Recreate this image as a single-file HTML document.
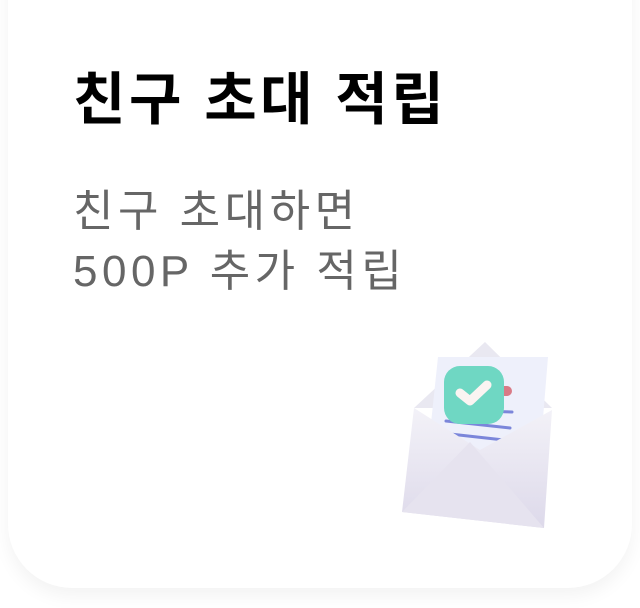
<!DOCTYPE html>
<html><head><meta charset="utf-8"><style>
html,body{margin:0;width:640px;height:608px;background:#fff;overflow:hidden;font-family:"Liberation Sans","Noto Sans CJK KR",sans-serif}
.card{position:absolute;left:8px;top:-80px;width:624px;height:668px;background:#fff;border-radius:64px;box-shadow:0 8px 18px rgba(0,0,0,0.05)}
.t{position:absolute;left:73px;top:65px;font-size:57px;font-weight:700;color:#000;line-height:70px;white-space:nowrap;letter-spacing:3.5px}
.s{position:absolute;left:73px;top:182px;font-size:44px;color:#666;line-height:60px;white-space:nowrap;letter-spacing:4.5px}
</style></head><body>
<div class="card"></div>
<div class="t">친구 초대 적립</div>
<div class="s">친구 초대하면<br>500P 추가 적립</div>
<svg style="position:absolute;left:380px;top:330px" width="200" height="220" viewBox="0 0 200 220">
<defs><linearGradient id="e" x1="0" y1="0" x2="0" y2="1"><stop offset="0" stop-color="#f3f2f8"/><stop offset="1" stop-color="#ddd9ea"/></linearGradient></defs>
<path d="M34 78 L105 12 L172 78 Z" fill="#e9e8f1"/>
<path d="M58 27 L168 27 L158 150 L45 150 Z" fill="#eef0fb"/>
<rect x="104" y="56" width="28" height="10" rx="5" fill="#d97a86"/>
<path d="M100 81 L132 82 M66 91 L130 98 M70 104 L124 110" stroke="#7b86da" stroke-width="3" stroke-linecap="round"/>
<rect x="64" y="36" width="60" height="58" rx="16" fill="#6fd7c3"/>
<path d="M80 63 L90 71 L107 55" stroke="#fbf4f2" stroke-width="9" fill="none" stroke-linecap="round" stroke-linejoin="round"/>
<path d="M34 78 L100 120 L172 80 L164 198 L22 182 Z" fill="url(#e)"/>
<path d="M22 182 L90 112 L164 198 Z" fill="#e6e3ef"/>
</svg>
</body></html>
